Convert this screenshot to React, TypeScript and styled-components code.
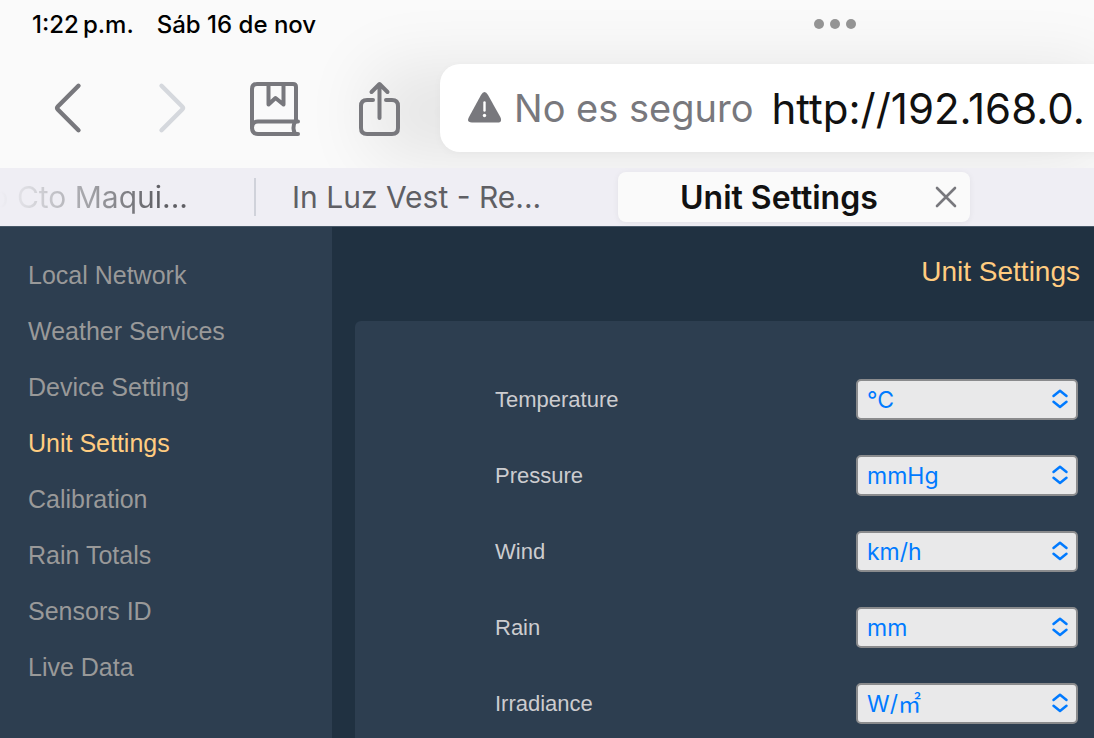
import React from "react";
import styled, { createGlobalStyle } from "styled-components";

const GlobalStyle = createGlobalStyle`
  *, *::before, *::after { box-sizing: border-box; }
  body { margin: 0; background: #203141; }
`;

const ui = `Inter, "Noto Sans CJK JP", sans-serif`;
const web = `"Liberation Sans", Arial, sans-serif`;

const Page = styled.div`
  display: flex;
  flex-direction: column;
  min-height: 100vh;
  overflow: hidden;
  font-family: ${ui};
`;

const Chrome = styled.header`
  background: #fafafa;
  overflow: hidden;
`;

const StatusBar = styled.div`
  position: relative;
  z-index: 1;
  display: grid;
  grid-template-columns: 3fr 1fr;
  align-items: center;
  height: 48px;
  padding: 0 20px 0 32px;
  font-size: 24px;
  font-weight: 500;
  color: #000;
`;

const Clock = styled.div`
  display: flex;
  gap: 23px;
  white-space: pre;
`;

const DotsButton = styled.button`
  display: flex;
  gap: 6px;
  justify-self: start;
  padding: 0;
  border: 0;
  background: none;
`;

const Dot = styled.span`
  width: 10px;
  height: 10px;
  border-radius: 50%;
  background: #949494;
`;

const Toolbar = styled.div`
  display: flex;
  align-items: center;
  height: 120px;
  padding: 0 0 0 36px;
`;

const ToolButtons = styled.div`
  display: flex;
  flex: none;
  gap: 40px;
  position: relative;
  z-index: 1;
  margin-right: 28px;
`;

const IconButton = styled.button<{ $faded?: boolean }>`
  display: flex;
  align-items: center;
  justify-content: center;
  width: 64px;
  height: 64px;
  padding: 0;
  border: 0;
  background: none;
  color: ${(p) => (p.$faded ? "#d5d8dd" : "#78787d")};
`;

const AddressBar = styled.label`
  display: flex;
  align-items: center;
  flex: 1;
  min-width: 0;
  height: 88px;
  margin-right: -80px;
  padding-left: 28px;
  border-radius: 20px;
  background: #fff;
  box-shadow: 0 2px 8px rgba(0, 0, 0, 0.03), -70px 4px 70px rgba(0, 0, 0, 0.09);
`;

const Security = styled.span`
  flex: none;
  margin: 0 18px 0 12px;
  font-size: 38px;
  color: #78787d;
`;

const AddressInput = styled.input`
  flex: 1;
  min-width: 0;
  padding: 0;
  border: 0;
  outline: 0;
  background: none;
  font: 400 42px ${ui};
  color: #111;
`;

const TabBar = styled.nav`
  display: flex;
  align-items: center;
  height: 58px;
  background: #efeef4;
  overflow: hidden;
  font-size: 30px;
  color: #5f5f64;
`;

const FirstTab = styled.button`
  display: flex;
  justify-content: flex-end;
  flex: none;
  width: 256px;
  height: 38px;
  padding: 0 66px 0 0;
  border: 0;
  border-right: 2px solid #d0d2da;
  background: none;
  font: inherit;
  line-height: 38px;
  white-space: nowrap;
  color: transparent;
  background-image: linear-gradient(90deg, #efeef4 0, #d9d9de 30px, #5f5f64 160px);
  background-clip: text;
`;

const Tab = styled.button`
  flex: none;
  width: 362px;
  padding: 0 0 0 36px;
  border: 0;
  background: none;
  font: inherit;
  color: inherit;
  text-align: left;
  white-space: nowrap;
`;

const ActiveTab = styled.div`
  display: flex;
  align-items: center;
  justify-content: space-between;
  flex: none;
  width: 352px;
  height: 50px;
  padding: 0 12px 0 62px;
  border-radius: 8px;
  background: #fafafa;
  box-shadow: 0 1px 6px rgba(0, 0, 0, 0.06);
  font-size: 32px;
  font-weight: 600;
  color: #111;
`;

const CloseButton = styled.button`
  display: flex;
  padding: 0;
  border: 0;
  background: none;
  color: #78787d;
`;

const Body = styled.div`
  display: flex;
  flex: 1;
  border-top: 1px solid #485868;
  background: #203141;
  font-family: ${web};
`;

const Sidebar = styled.nav`
  flex: none;
  width: 332px;
  padding: 20px 0 20px 28px;
  background: #2d3e50;
`;

const NavLink = styled.a<{ $active?: boolean }>`
  display: block;
  font-size: 25px;
  line-height: 56px;
  text-decoration: none;
  color: ${(p) => (p.$active ? "#ffcc80" : "#999999")};
`;

const Content = styled.main`
  display: flex;
  flex-direction: column;
  flex: 1;
  min-width: 0;
  padding-left: 23px;
`;

const Title = styled.h1`
  margin: 0;
  padding: 0 14px 4px 0;
  text-align: right;
  font-size: 28px;
  font-weight: 400;
  line-height: 90px;
  color: #ffcc80;
`;

const Panel = styled.form`
  display: flex;
  flex-direction: column;
  flex: 1;
  gap: 35px;
  padding: 58px 16px 12px 140px;
  border-radius: 6px 0 0 0;
  background: #2d3e50;
`;

const Field = styled.div`
  display: flex;
  align-items: center;
  justify-content: space-between;
  height: 41px;
`;

const FieldLabel = styled.label`
  font-size: 22px;
  line-height: 28px;
  color: #cccccf;
`;

const SelectBox = styled.div`
  position: relative;
  width: 222px;
`;

const Select = styled.select`
  appearance: none;
  display: block;
  width: 100%;
  height: 41px;
  padding: 0 32px 0 9px;
  border: 2px solid #8a8b8d;
  border-radius: 5px;
  background: #e9e9ea;
  font: 400 23px ${ui};
  color: #007aff;
`;

const Arrows = styled.svg`
  position: absolute;
  top: 10px;
  right: 9px;
  pointer-events: none;
`;

const navItems = [
  "Local Network",
  "Weather Services",
  "Device Setting",
  "Unit Settings",
  "Calibration",
  "Rain Totals",
  "Sensors ID",
  "Live Data",
];

const fields = [
  { id: "temperature", label: "Temperature", value: "°C" },
  { id: "pressure", label: "Pressure", value: "mmHg" },
  { id: "wind", label: "Wind", value: "km/h" },
  { id: "rain", label: "Rain", value: "mm" },
  { id: "irradiance", label: "Irradiance", value: "W/㎡" },
];

const stroke = {
  fill: "none",
  stroke: "currentColor",
  strokeLinecap: "round" as const,
  strokeLinejoin: "round" as const,
};

const BackIcon = () => (
  <svg width="64" height="64" viewBox="0 0 64 64" {...stroke} strokeWidth="4.4">
    <path d="M42.5 9.8 21.8 30.5q-1.5 1.5 0 3L42.5 54.2" />
  </svg>
);

const ForwardIcon = () => (
  <svg width="64" height="64" viewBox="0 0 64 64" {...stroke} strokeWidth="4.4">
    <path d="M21.5 9.8 42.2 30.5q1.5 1.5 0 3L21.5 54.2" />
  </svg>
);

const BookIcon = () => (
  <svg width="64" height="64" viewBox="0 0 64 64" {...stroke} strokeWidth="4">
    <path d="M8 51.500V13q0-5 5-5h36q3 0 3 3v34.500" />
    <path d="M54 45.500H14q-6 0-6 6.200T14 58h40" />
    <path d="M51 45.500q-3 6.200 0 12.500" />
    <path d="M24.500 9v19.500l7-6.500 8 6.500V9" />
  </svg>
);

const ShareIcon = () => (
  <svg width="64" height="64" viewBox="0 0 64 64" {...stroke} strokeWidth="4">
    <path d="M25 24h-6q-6 0-6 6v22q0 6 6 6h25q6 0 6-6V30q0-6-6-6h-6" />
    <path d="M31.500 42V8.500M23.500 16l8-8 8 8" />
  </svg>
);

const WarningIcon = () => (
  <svg width="34" height="34" viewBox="0 0 34 34" aria-hidden="true">
    <path
      d="M13 4q3.500-6 7 0l12.300 22q2.500 5.500-3 5.500H4q-6 0-3-5.500z"
      fill="#78787d"
    />
    <path d="M16.500 11.500v8" stroke="#fff" strokeWidth="2.4" strokeLinecap="round" />
    <circle cx="16.500" cy="24.500" r="1.700" fill="#fff" />
  </svg>
);

export default function App() {
  return (
    <Page>
      <GlobalStyle />
      <Chrome>
        <StatusBar>
          <Clock>
            <span>1:22{"\u2009"}p.m.</span>
            <span>Sáb 16 de nov</span>
          </Clock>
          <DotsButton type="button" aria-label="Multitasking">
            <Dot />
            <Dot />
            <Dot />
          </DotsButton>
        </StatusBar>
        <Toolbar>
          <ToolButtons>
            <IconButton type="button" aria-label="Back">
              <BackIcon />
            </IconButton>
            <IconButton type="button" aria-label="Forward" $faded>
              <ForwardIcon />
            </IconButton>
            <IconButton type="button" aria-label="Bookmarks">
              <BookIcon />
            </IconButton>
            <IconButton type="button" aria-label="Share">
              <ShareIcon />
            </IconButton>
          </ToolButtons>
          <AddressBar>
            <WarningIcon />
            <Security>No es seguro</Security>
            <AddressInput type="text" defaultValue="http://192.168.0." />
          </AddressBar>
        </Toolbar>
      </Chrome>
      <TabBar aria-label="Tabs">
        <FirstTab type="button">o Cto Maqui...</FirstTab>
        <Tab type="button">In Luz Vest - Re...</Tab>
        <ActiveTab>
          <span>Unit Settings</span>
          <CloseButton type="button" aria-label="Close tab">
            <svg width="24" height="24" viewBox="0 0 24 24" {...stroke} strokeWidth="2.6">
              <path d="M3 3l18 18M21 3L3 21" />
            </svg>
          </CloseButton>
        </ActiveTab>
      </TabBar>
      <Body>
        <Sidebar aria-label="Sections">
          {navItems.map((item) => (
            <NavLink key={item} href="#" $active={item === "Unit Settings"}>
              {item}
            </NavLink>
          ))}
        </Sidebar>
        <Content>
          <Title>Unit Settings</Title>
          <Panel>
            {fields.map((f) => (
              <Field key={f.id}>
                <FieldLabel htmlFor={f.id}>{f.label}</FieldLabel>
                <SelectBox>
                  <Select id={f.id} defaultValue={f.value}>
                    <option>{f.value}</option>
                  </Select>
                  <Arrows
                    width="18"
                    height="20"
                    viewBox="0 0 18 20"
                    fill="none"
                    stroke="#007aff"
                    strokeWidth="2.5"
                    strokeLinecap="round"
                    strokeLinejoin="round"
                  >
                    <path d="M2.500 7 9 1.800 15.500 7M2.500 12.800 9 18l6.500-5.200" />
                  </Arrows>
                </SelectBox>
              </Field>
            ))}
          </Panel>
        </Content>
      </Body>
    </Page>
  );
}
